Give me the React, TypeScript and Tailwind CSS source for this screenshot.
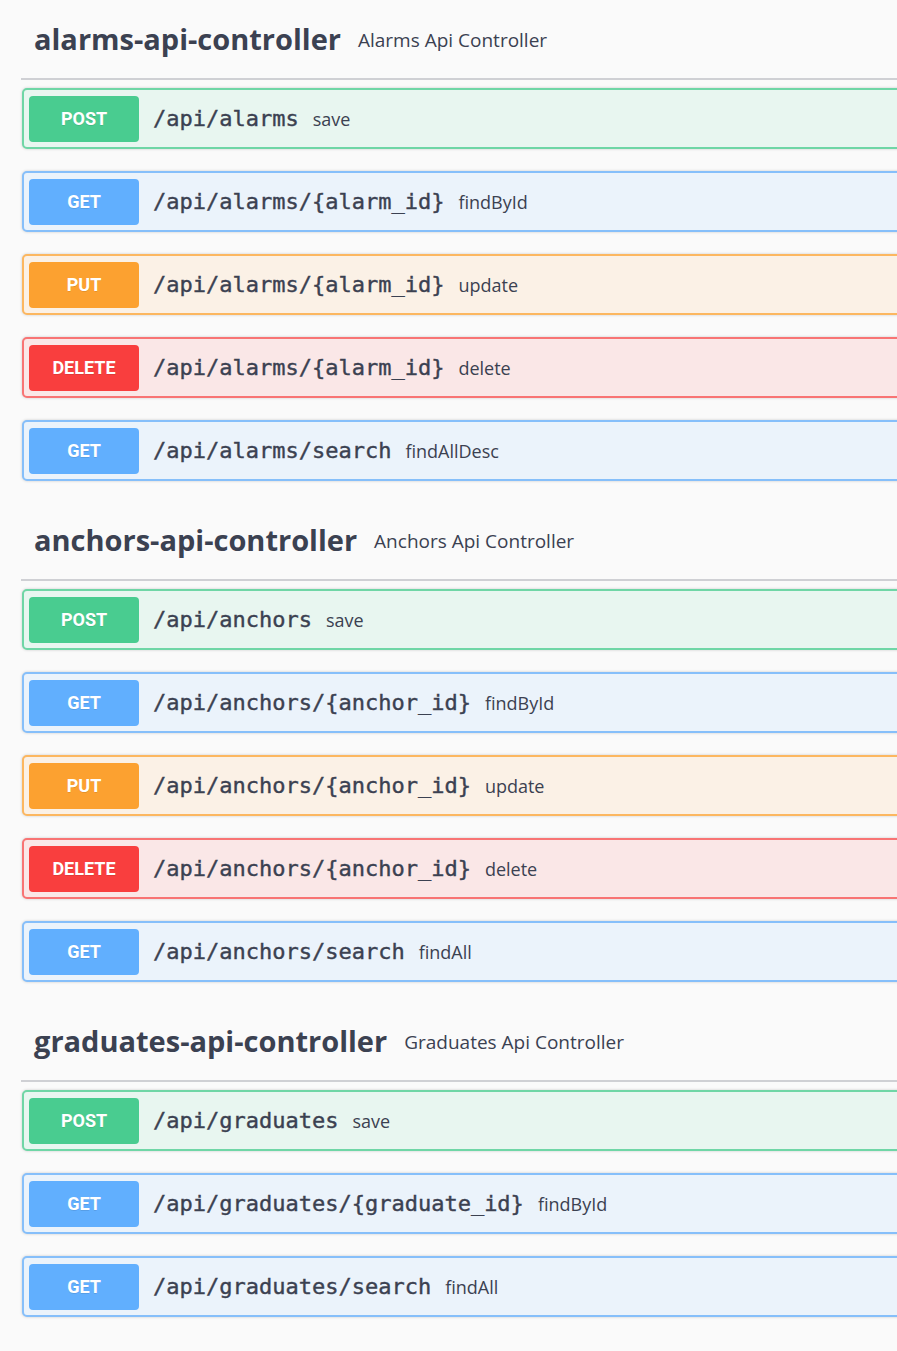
import React from "react";

type Method = "POST" | "GET" | "PUT" | "DELETE";

const styles: Record<Method, { block: string; badge: string }> = {
  POST: {
    block: "bg-[#e8f6f0] border-[#6fd6a6]",
    badge: "bg-[#49cc90]",
  },
  GET: {
    block: "bg-[#ebf3fb] border-[#86bffa]",
    badge: "bg-[#61affe]",
  },
  PUT: {
    block: "bg-[#fbf1e6] border-[#fcb760]",
    badge: "bg-[#fca130]",
  },
  DELETE: {
    block: "bg-[#fae7e7] border-[#f87474]",
    badge: "bg-[#f93e3e]",
  },
};

type Op = { method: Method; path: string; desc: string };
type Section = { name: string; desc: string; ops: Op[] };

const sections: Section[] = [
  {
    name: "alarms-api-controller",
    desc: "Alarms Api Controller",
    ops: [
      { method: "POST", path: "/api/alarms", desc: "save" },
      { method: "GET", path: "/api/alarms/{alarm_id}", desc: "findById" },
      { method: "PUT", path: "/api/alarms/{alarm_id}", desc: "update" },
      { method: "DELETE", path: "/api/alarms/{alarm_id}", desc: "delete" },
      { method: "GET", path: "/api/alarms/search", desc: "findAllDesc" },
    ],
  },
  {
    name: "anchors-api-controller",
    desc: "Anchors Api Controller",
    ops: [
      { method: "POST", path: "/api/anchors", desc: "save" },
      { method: "GET", path: "/api/anchors/{anchor_id}", desc: "findById" },
      { method: "PUT", path: "/api/anchors/{anchor_id}", desc: "update" },
      { method: "DELETE", path: "/api/anchors/{anchor_id}", desc: "delete" },
      { method: "GET", path: "/api/anchors/search", desc: "findAll" },
    ],
  },
  {
    name: "graduates-api-controller",
    desc: "Graduates Api Controller",
    ops: [
      { method: "POST", path: "/api/graduates", desc: "save" },
      { method: "GET", path: "/api/graduates/{graduate_id}", desc: "findById" },
      { method: "GET", path: "/api/graduates/search", desc: "findAll" },
    ],
  },
];

function OpBlock({ op }: { op: Op }) {
  const s = styles[op.method];
  return (
    <div
      className={`ml-px flex h-[61px] items-center rounded-[5px] border-2 px-[5px] shadow-[0_0_3px_rgba(0,0,0,0.19)] ${s.block}`}
    >
      <div
        className={`flex h-[46px] w-[110px] shrink-0 items-center justify-center rounded-[4px] text-[18px] font-bold text-white [font-family:Roboto,'Open_Sans',sans-serif] [text-shadow:0_1px_0_rgba(0,0,0,0.1)] ${s.badge}`}
      >
        {op.method}
      </div>
      <div className="ml-[14px] flex items-baseline">
        <span className="text-[22px] leading-[28px] font-normal text-[#3b4151] [font-family:'DejaVu_Sans_Mono','Liberation_Mono',monospace] [-webkit-text-stroke:0.4px_#3b4151]">
          {op.path}
        </span>
        <span className="ml-[14px] text-[18px] leading-[24px] text-[#3b4151] [font-family:'Open_Sans',sans-serif]">
          {op.desc}
        </span>
      </div>
    </div>
  );
}

function ApiSection({ section }: { section: Section }) {
  return (
    <div className="flex flex-col">
      <div className="flex h-[80px] items-baseline border-b-2 border-[#cfd0d4] pl-[13px] pt-[21px]">
        <span className="text-[29px] leading-[36px] font-bold text-[#3b4151] [font-family:'Open_Sans',sans-serif]">
          {section.name}
        </span>
        <span className="relative top-[-3px] ml-[17px] text-[19px] leading-[20px] text-[#3b4151] [font-family:'Open_Sans',sans-serif]">
          {section.desc}
        </span>
      </div>
      <div className="mt-[8px] flex flex-col gap-[22px]">
        {section.ops.map((op, i) => (
          <OpBlock key={i} op={op} />
        ))}
      </div>
    </div>
  );
}

export default function App() {
  return (
    <div className="min-h-[1351px] w-full overflow-hidden bg-[#fafafa]">
      <div className="flex w-[940px] flex-col gap-[20px] pl-[21px]">
        {sections.map((s, i) => (
          <ApiSection key={i} section={s} />
        ))}
      </div>
    </div>
  );
}
